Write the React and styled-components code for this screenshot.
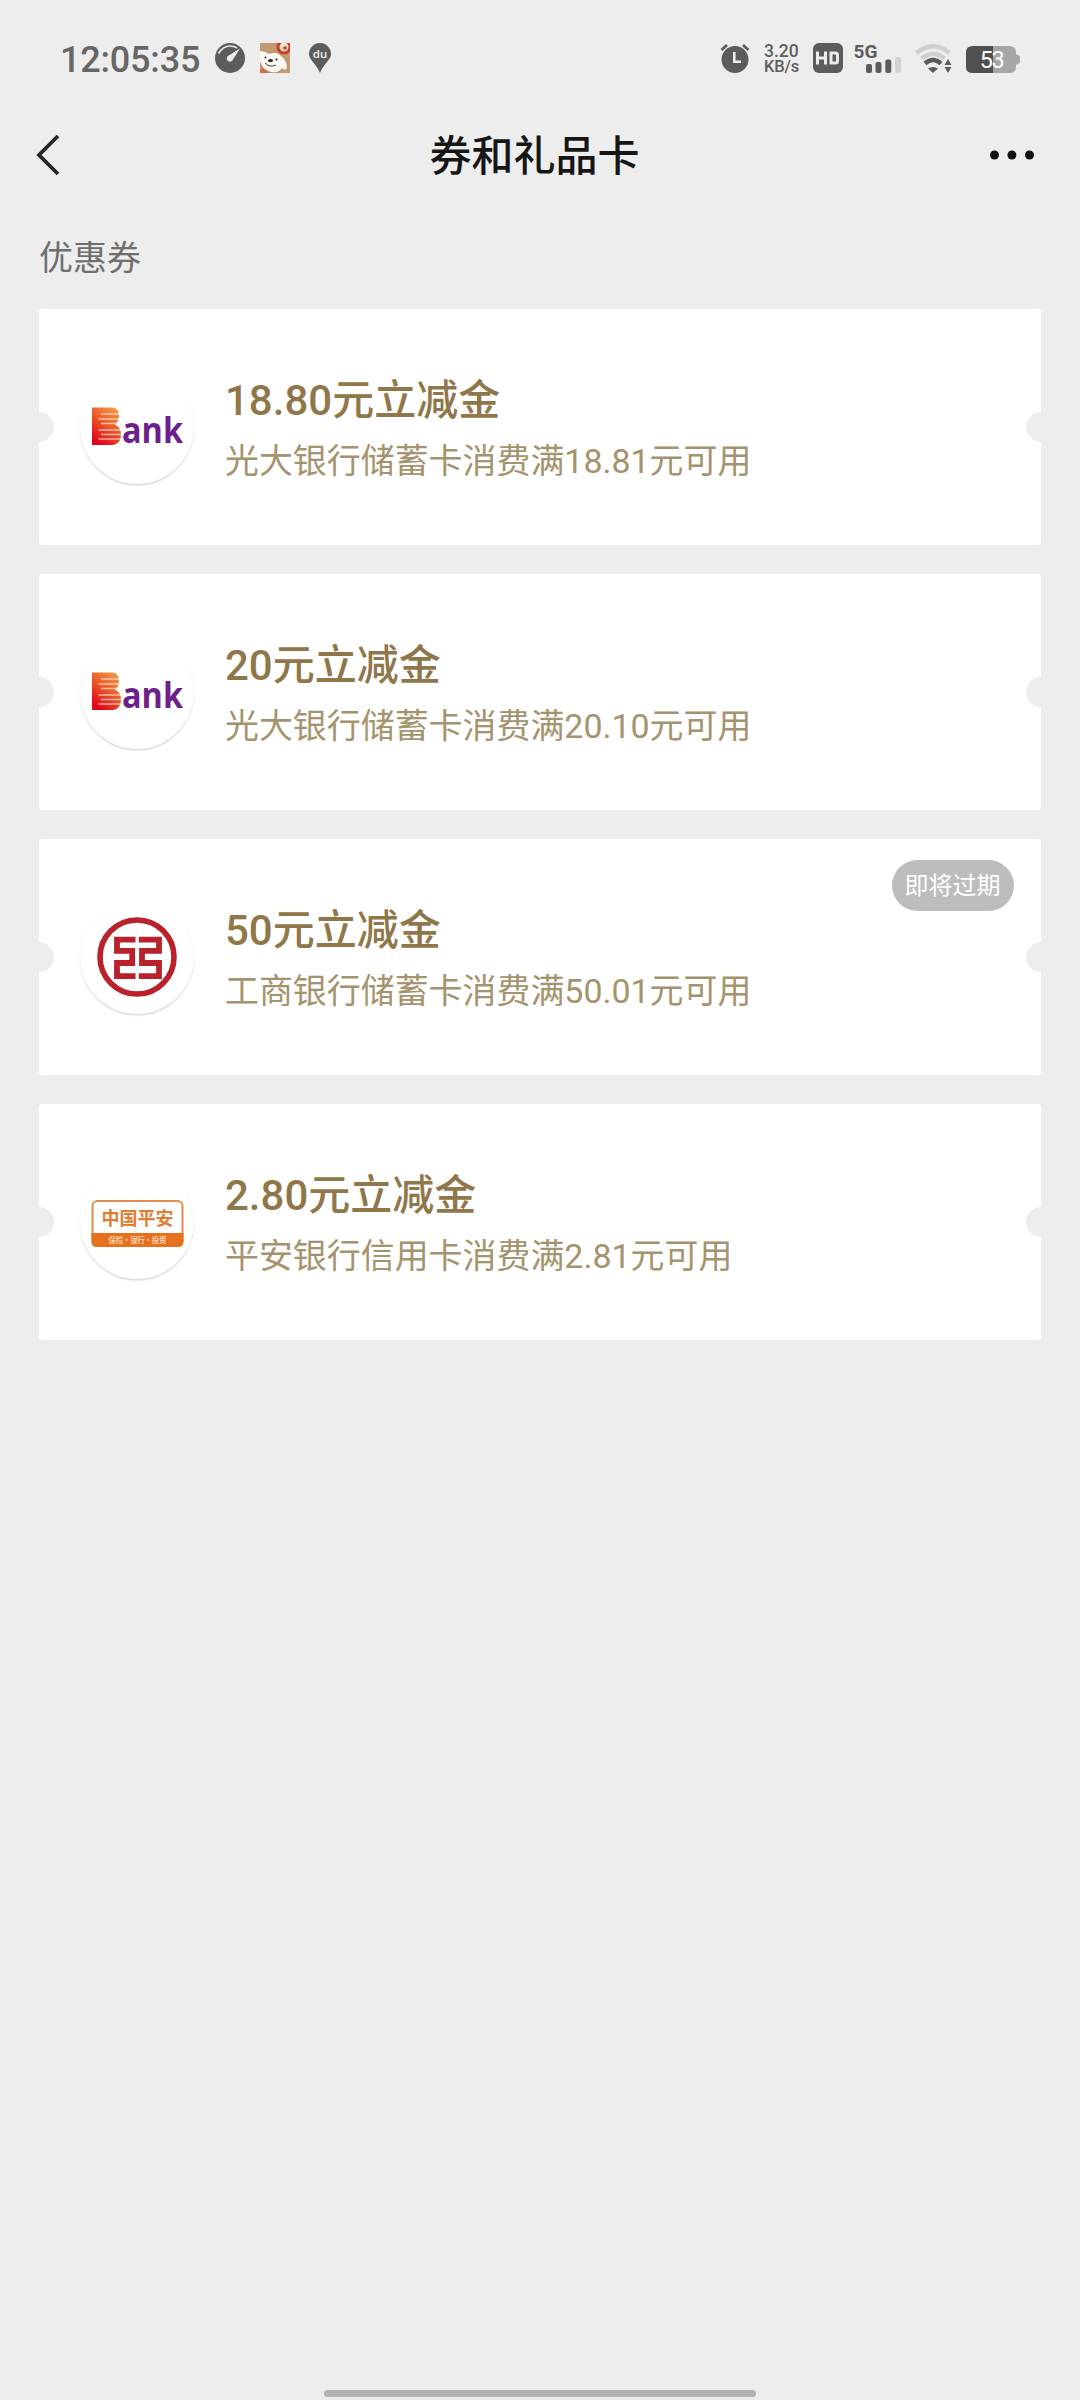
import React from 'react';
import styled, { createGlobalStyle } from 'styled-components';

const cupones = [
    { id: 1, logo: 'ebank', titulo: '18.80元立减金', detalle: '光大银行储蓄卡消费满18.81元可用' },
    { id: 2, logo: 'ebank', titulo: '20元立减金', detalle: '光大银行储蓄卡消费满20.10元可用' },
    { id: 3, logo: 'icbc', titulo: '50元立减金', detalle: '工商银行储蓄卡消费满50.01元可用', aviso: '即将过期' },
    { id: 4, logo: 'pingan', titulo: '2.80元立减金', detalle: '平安银行信用卡消费满2.81元可用' },
];

const LogoEbank = () => (
    <svg width="114" height="114" viewBox="0 0 114 114">
        <defs>
            <linearGradient id="ebank" x1="0.9" y1="0" x2="0.3" y2="1">
                <stop offset="0" stopColor="#f3a04a" />
                <stop offset="0.5" stopColor="#ea5a26" />
                <stop offset="1" stopColor="#e0061a" />
            </linearGradient>
        </defs>
        <path d="M12 37.500H33q6 1 6 8q0 6-4 9q6 3 6 10q0 9-8 10.500H12Z" fill="url(#ebank)" />
        <path d="M21 44H39M18.500 49H40M21 53.500H38M18.500 60H41M21 64.500H41M18.500 69H41" stroke="#fff" strokeWidth="1.300" opacity="0.600" />
        <text x="42" y="72.500" fontFamily="'Open Sans', sans-serif" fontWeight="700" fontSize="36" textLength="61" lengthAdjust="spacingAndGlyphs" fill="#6d1f8d">ank</text>
    </svg>
);

const LogoIcbc = () => (
    <svg width="114" height="114" viewBox="0 0 114 114">
        <g fill="none" stroke="#b9222b">
            <circle cx="57" cy="57" r="37" strokeWidth="5.600" />
            <path d="M55.500 39.600H37V50.900H52.200V63H37V76.200H55.500" strokeWidth="5.800" />
            <path d="M58.800 39.600H79V50.900H62V63H79V76.200H58.800" strokeWidth="5.800" />
        </g>
    </svg>
);

const LogoPingan = () => (
    <svg width="114" height="114" viewBox="0 0 114 114">
        <rect x="12.500" y="36" width="90" height="45" rx="5" fill="#fff" stroke="#e08a50" strokeWidth="2" />
        <path d="M11.500 68H103.500V76.500q0 5.500-5.500 5.500H17q-5.500 0-5.500-5.500Z" fill="#e6711c" />
        <g fontFamily="'Noto Sans CJK SC', sans-serif" textAnchor="middle">
            <text x="57.500" y="59.500" fontSize="18" fontWeight="700" fill="#e27c33">中国平安</text>
            <text x="57.500" y="77.500" fontSize="7.500" fontWeight="500" textLength="58" fill="#fbe0c8">保险·银行·投资</text>
        </g>
    </svg>
);

const logos = { ebank: LogoEbank, icbc: LogoIcbc, pingan: LogoPingan };

const IconosAvisos = () => (
    <>
        <Icono $izq={15} width="30" height="30" viewBox="0 0 30 30">
            <circle cx="15" cy="15" r="15" fill="#5c5c5c" />
            <path d="M3.500 10.500Q8 3 15 3Q19 3 22 5" fill="none" stroke="#ececec" strokeWidth="1.600" />
            <path d="M25 5.500L18 16.500A3.200 3.200 0 1 1 13.300 12.800Z" fill="#ececec" />
        </Icono>
        <Icono $izq={15} width="30" height="30" viewBox="0 0 30 30">
            <rect width="30" height="30" fill="#c19a73" />
            <circle cx="24" cy="4" r="6" fill="#f2dfca" stroke="#cb3d22" strokeWidth="3" />
            <circle cx="25" cy="5" r="1.800" fill="#cb3d22" />
            <path d="M0 8Q5 8 9 11Q17 8 21 13Q26 16 27 25Q25 28 22 25Q19 30 12 29Q3 28 0 18Z" fill="#fff9f3" />
            <path d="M0 26Q5 25 9 30H0Z" fill="#d8694a" />
            <ellipse cx="10.500" cy="17.500" rx="2.600" ry="1.600" fill="#222" />
            <circle cx="5.500" cy="14.500" r="0.900" fill="#222" />
            <circle cx="16.500" cy="16.500" r="1.100" fill="#222" />
            <path d="M5 20Q10 25 16 22" fill="none" stroke="#443" strokeWidth="1" />
        </Icono>
        <Icono $izq={19} width="22" height="30" viewBox="0 0 22 30">
            <path d="M11 0A11 11 0 0 1 22 11C22 17 15 20 11 30C7 20 0 17 0 11A11 11 0 0 1 11 0Z" fill="#5c5c5c" />
            <text x="11" y="15" textAnchor="middle" fontFamily="'Open Sans', sans-serif" fontSize="11.500" fontWeight="600" fill="#eee">du</text>
        </Icono>
    </>
);

const IconoAlarma = () => (
    <Icono width="30" height="30" viewBox="0 0 30 30">
        <circle cx="15" cy="16.500" r="13.500" fill="#5c5c5c" />
        <path d="M1.500 7L7 2M28.500 7L23 2" stroke="#5c5c5c" strokeWidth="2.800" />
        <path d="M14.300 9V18.800H21" fill="none" stroke="#ececec" strokeWidth="2.600" />
    </Icono>
);

const IconoHD = () => (
    <Icono $izq={14} width="30" height="30" viewBox="0 0 30 30">
        <rect width="30" height="30" rx="6" fill="#5c5c5c" />
        <path d="M4.500 8.500V21.500M12.500 8.500V21.500M4.500 15H12.500M18 10H22.500Q24.500 10 24.500 12V18Q24.500 20 22.500 20H18Z" fill="none" stroke="#ececec" strokeWidth="3" />
    </Icono>
);

const IconoSenal = () => (
    <Icono $izq={9} width="50" height="32" viewBox="0 -2 50 32">
        <text x="1.500" y="13.500" fontFamily="Roboto, sans-serif" fontSize="18.500" fontWeight="700" textLength="24" lengthAdjust="spacingAndGlyphs" fill="#5c5c5c">5G</text>
        <g fill="#5c5c5c">
            <rect x="14" y="20" width="6" height="9" rx="2" />
            <rect x="23.500" y="18" width="6" height="11" rx="2" />
            <rect x="33.300" y="15.500" width="6" height="13.500" rx="2" />
            <rect x="43" y="13" width="6" height="16" rx="2" fill="#d2d2d2" />
        </g>
    </Icono>
);

const IconoWifi = () => (
    <Icono $izq={13} width="37" height="30" viewBox="0 0 37 30">
        <g fill="none">
            <path d="M1.500 10Q18 -3.500 34.500 10" stroke="#cfcfcf" strokeWidth="4.500" />
            <path d="M6.500 15.500Q18 6.500 29.500 15.500" stroke="#cfcfcf" strokeWidth="4.500" />
            <path d="M10 20.500Q18 13.500 26 20.500" stroke="#5c5c5c" strokeWidth="4.500" />
        </g>
        <path d="M13 25.500Q18 22.500 23 25.500L18 30Z" fill="#5c5c5c" />
        <path d="M29.500 22L33 16L36.500 22ZM29.500 24L33 30L36.500 24Z" fill="#5c5c5c" />
    </Icono>
);

const IconoBateria = () => (
    <Icono $izq={14} width="54" height="30" viewBox="0 0 54 30">
        <path d="M27 3H43Q50 3 50 9V24Q50 30 43 30H27Z" fill="#a6a6a6" />
        <path d="M51 11.500Q54 12.500 54 14V18.500Q54 20.500 51 21.500H49V11.500Z" fill="#a6a6a6" />
        <path d="M27 3H7Q0 3 0 9V24Q0 30 7 30H27Z" fill="#505050" />
        <text x="26.200" y="24.800" textAnchor="middle" fontFamily="Roboto, sans-serif" fontSize="23.500" fontWeight="400" textLength="25" fill="#fff">53</text>
    </Icono>
);

const App = () => {
    return (
        <>
            <EstiloGlobal />
            <Pantalla>
                <BarraEstado>
                    <Hora>12:05:35</Hora>
                    <IconosAvisos />
                    <Espacio />
                    <IconoAlarma />
                    <Velocidad>
                        <span>3.20</span>
                        <Unidad>KB/s</Unidad>
                    </Velocidad>
                    <IconoHD />
                    <IconoSenal />
                    <IconoWifi />
                    <IconoBateria />
                </BarraEstado>
                <Cabecera>
                    <svg width="30" height="46" viewBox="0 0 30 46">
                        <path d="M22 4L3 23L22 42" fill="none" stroke="#262626" strokeWidth="3.800" />
                    </svg>
                    <h1>券和礼品卡</h1>
                    <svg width="46" height="10" viewBox="0 0 46 10">
                        <circle cx="5.500" cy="5" r="4.500" fill="#111" />
                        <circle cx="22.900" cy="5" r="4.500" fill="#111" />
                        <circle cx="40.500" cy="5" r="4.500" fill="#111" />
                    </svg>
                </Cabecera>
                <Seccion>优惠券</Seccion>
                <Lista>
                    {cupones.map((cupon) => {
                        const Logo = logos[cupon.logo];
                        return <Cupon key={cupon.id}>
                            <Circulo><Logo /></Circulo>
                            <Textos>
                                <Titulo>{cupon.titulo}</Titulo>
                                <Detalle>{cupon.detalle}</Detalle>
                            </Textos>
                            {cupon.aviso && <Aviso>{cupon.aviso}</Aviso>}
                        </Cupon>
                    })}
                </Lista>
                <BarraInicio />
            </Pantalla>
        </>
    );
}

const EstiloGlobal = createGlobalStyle`
    body {
        margin: 0;
        background: #ededed;
        font-family: Roboto, 'Noto Sans CJK SC', sans-serif;
    }

    svg {
        display: block;
        flex-shrink: 0;
    }
`

const Pantalla = styled.div`
    display: flex;
    flex-direction: column;
    box-sizing: border-box;
    width: 1080px;
    height: 2400px;
    padding-bottom: 3px;
    background: #ededed;
    overflow: hidden;
`

const BarraEstado = styled.div`
    display: flex;
    align-items: center;
    box-sizing: border-box;
    height: 116px;
    padding: 0 60px 0 60px;
`

const Hora = styled.div`
    width: 140px;
    padding-top: 3px;
    font-size: 36px;
    font-weight: 500;
    line-height: 42px;
    letter-spacing: -0.2px;
    white-space: nowrap;
    color: #666;
`

const Icono = styled.svg`
    margin-left: ${(props) => props.$izq || 0}px;
`

const Espacio = styled.div`
    flex: 1;
`

const Velocidad = styled.div`
    display: flex;
    flex-direction: column;
    width: 35px;
    margin-left: 14px;
    padding-top: 1px;
    font-size: 17.5px;
    font-weight: 500;
    line-height: 16px;
    white-space: nowrap;
    color: #5f5f5f;
`

const Unidad = styled.span`
    font-size: 16.5px;
    letter-spacing: -0.2px;
`

const Cabecera = styled.div`
    display: flex;
    align-items: center;
    justify-content: space-between;
    height: 78px;
    padding: 0 45px 0 36px;

    h1 {
        margin: 0;
        padding: 3px 0 0 14px;
        font-size: 42px;
        font-weight: 500;
        line-height: 60px;
        color: #161616;
    }
`

const Seccion = styled.div`
    height: 50px;
    padding: 39px 39px 26px;
    font-size: 34px;
    line-height: 50px;
    color: #6e6e6e;
`

const Lista = styled.div`
    display: flex;
    flex-direction: column;
    gap: 29px;
    flex: 1;
    padding: 0 39px;
`

const Cupon = styled.div`
    position: relative;
    display: flex;
    align-items: center;
    box-sizing: border-box;
    height: 236px;
    padding-left: 41px;
    border-radius: 3px;
    background:
        radial-gradient(circle at 0 118px, #ededed 14.500px, transparent 15.500px),
        radial-gradient(circle at 100% 118px, #ededed 14.500px, transparent 15.500px),
        #fff;
`

const Circulo = styled.div`
    width: 114px;
    height: 114px;
    border-radius: 50%;
    box-shadow: 0 1.5px 1.5px rgba(0, 0, 0, 0.16);
`

const Textos = styled.div`
    margin-left: 31px;
    padding-top: 4px;
`

const Titulo = styled.div`
    font-size: 42px;
    font-weight: 500;
    line-height: 60px;
    color: #8f774a;
`

const Detalle = styled.div`
    font-size: 33.95px;
    line-height: 50px;
    padding-top: 6px;
    color: #a4936c;
`

// etiqueta sobre la esquina del cupón
const Aviso = styled.div`
    position: absolute;
    top: 21px;
    right: 27.5px;
    box-sizing: border-box;
    width: 122px;
    height: 51px;
    padding-top: 1px;
    border-radius: 26px;
    background: #bdbdbd;
    color: #fff;
    font-size: 24px;
    line-height: 50px;
    text-align: center;
`

const BarraInicio = styled.div`
    width: 432px;
    height: 7px;
    margin: 0 auto;
    border-radius: 4px;
    background: #b3b3b3;
`

export default App;
